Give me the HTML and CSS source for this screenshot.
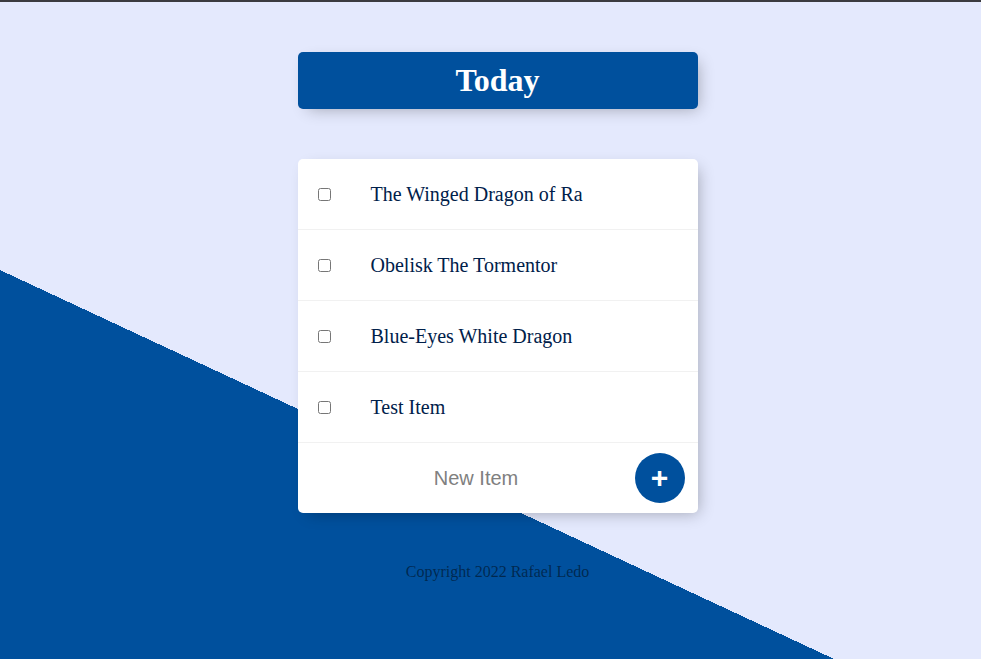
FILE: index.html
```html
<!DOCTYPE html>
<html lang="en">
<head>
<meta charset="utf-8">
<title>To Do List</title>
<link rel="stylesheet" href="styles.css">
</head>
<body>
  <div class="box heading">
    <h1>Today</h1>
  </div>
  <div class="box">
    <div class="item">
      <input type="checkbox" class="check">
      <p class="item-text">The Winged Dragon of Ra</p>
    </div>
    <div class="item">
      <input type="checkbox" class="check">
      <p class="item-text">Obelisk The Tormentor</p>
    </div>
    <div class="item">
      <input type="checkbox" class="check">
      <p class="item-text">Blue-Eyes White Dragon</p>
    </div>
    <div class="item">
      <input type="checkbox" class="check">
      <p class="item-text">Test Item</p>
    </div>
    <form class="item add-form" action="#">
      <input type="text" class="new-item" name="newItem" placeholder="New Item" autocomplete="off">
      <button type="submit" class="add-btn" name="list">+</button>
    </form>
  </div>
  <footer class="footer">Copyright 2022 Rafael Ledo</footer>
</body>
</html>
```

FILE: styles.css
```css
html {
  height: 657px;
  border-top: 2px solid #3b3b40;
  background-color: #E4E9FD;
  background-image: linear-gradient(25deg, #00509D 34.9%, #E4E9FD 34.9%);
  font-family: "Liberation Serif", "Times New Roman", serif;
}

body {
  margin: 0 8px 8px 22px;
}

.box {
  max-width: 400px;
  margin: 50px auto;
  background: #fff;
  border-radius: 5px;
  box-shadow: 5px 5px 15px -5px rgba(0, 0, 0, 0.3);
}

.box.heading {
  background-color: #00509D;
  text-align: center;
}

.heading h1 {
  color: #fff;
  padding: 10px;
  font-size: 32px;
}

.item {
  min-height: 70px;
  display: flex;
  align-items: center;
  border-bottom: 1px solid #F1F1F1;
}

.item:last-child {
  border-bottom: 0;
}

.check {
  margin: 20px;
}

.item-text {
  margin: 0;
  padding: 20px;
  font-size: 20px;
  font-weight: 200;
  color: #00204a;
}

.add-form {
  margin-left: 20px;
}

.new-item {
  text-align: center;
  height: 60px;
  border: none;
  background: transparent;
  font-family: "Liberation Sans", Arial, sans-serif;
  font-size: 20px;
  font-weight: 200;
  width: 313px;
  padding: 1px 2px;
  margin: 0;
  box-sizing: content-box;
}

.new-item::placeholder {
  color: grey;
  opacity: 1;
}

.add-btn {
  height: 50px;
  width: 50px;
  border-radius: 50%;
  border: 0;
  background-color: #00509D;
  color: #fff;
  font-family: "Liberation Sans", Arial, sans-serif;
  font-size: 30px;
  font-weight: 700;
  padding: 0;
  margin: 0;
  line-height: 50px;
}

.footer {
  color: rgba(0, 0, 0, 0.5);
  text-align: center;
  font-size: 16px;
}
```
